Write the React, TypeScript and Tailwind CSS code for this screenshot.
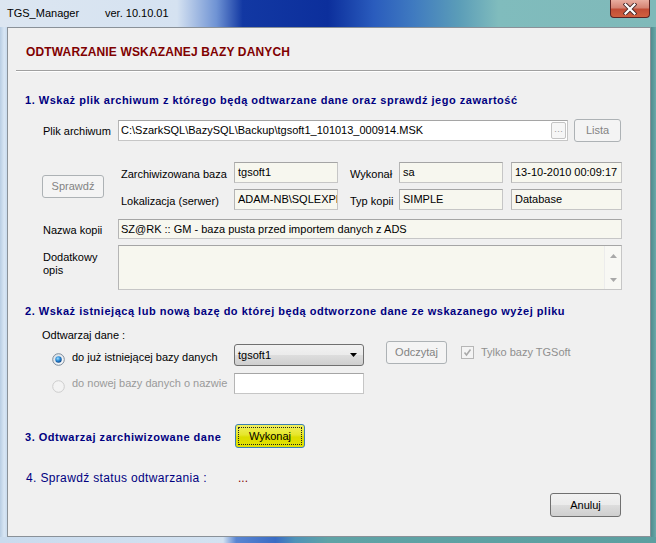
import React from "react";

const roField =
  "h-[21px] bg-[#f7f7ef] border border-[#c6c6c6] border-t-[#a5a5a5] border-l-[#b5b5b5] pl-[3px] flex items-center overflow-hidden whitespace-nowrap";
const disBtn =
  "h-[23px] rounded-[3px] border border-[#adb2b5] bg-[#f4f4f4] text-[#838383] flex items-center justify-center";
const navyHead =
  "font-bold text-[11px] leading-[14px] tracking-[0.52px] text-[#000080] whitespace-nowrap";

function RadioOn() {
  return (
    <svg width="13" height="13" viewBox="0 0 13 13">
      <defs>
        <linearGradient id="rg1" x1="0" y1="0" x2="1" y2="1">
          <stop offset="0" stopColor="#d6dde4" />
          <stop offset="1" stopColor="#ffffff" />
        </linearGradient>
        <radialGradient id="rg2" cx="0.4" cy="0.35" r="0.7">
          <stop offset="0" stopColor="#9fe0ff" />
          <stop offset="0.5" stopColor="#2a8ad6" />
          <stop offset="1" stopColor="#0d3f80" />
        </radialGradient>
      </defs>
      <circle cx="6.5" cy="6.5" r="5.8" fill="url(#rg1)" stroke="#7b8a99" strokeWidth="1" />
      <circle cx="6.5" cy="6.5" r="3.2" fill="url(#rg2)" />
    </svg>
  );
}

function RadioOff() {
  return (
    <svg width="13" height="13" viewBox="0 0 13 13">
      <circle cx="6.5" cy="6.5" r="5.8" fill="#f3f3f3" stroke="#cdcdcd" strokeWidth="1" />
    </svg>
  );
}

export default function App() {
  return (
    <div className="w-[656px] h-[543px] flex flex-col overflow-hidden font-['Liberation_Sans',Arial,sans-serif] text-[11px] text-black">
      {/* title bar */}
      <div className="h-[27px] flex items-start bg-[linear-gradient(90deg,#dce6f1_0%,#d5e2f1_27%,#6f93d4_33%,#1238a3_37%,#0c2f9c_50%,#2a5cbd_57%,#3f7ac0_63%,#5b9db8_70%,#80bcbd_76%,#7fb9b9_100%)]">
        <div className="pl-[7px] pt-[5px] leading-[16px] text-[11px] flex">
          <span className="inline-block w-[98px]">TGS_Manager</span>
          <span>ver. 10.10.01</span>
        </div>
        <div className="ml-auto mr-[6px] w-[40px] h-[18px] rounded-b-[4px] border border-t-0 border-[#5b2323] bg-[linear-gradient(180deg,#e9ada0_0%,#d58474_45%,#c24d36_55%,#d0603f_100%)] flex items-center justify-center">
          <svg width="14" height="12" viewBox="0 0 14 12">
            <path d="M2.5 1.5 L11.5 10.5 M11.5 1.5 L2.5 10.5" stroke="#4a2a2a" strokeWidth="4" strokeLinecap="square" />
            <path d="M2.5 1.5 L11.5 10.5 M11.5 1.5 L2.5 10.5" stroke="#ffffff" strokeWidth="2.2" strokeLinecap="square" />
          </svg>
        </div>
      </div>

      {/* middle */}
      <div className="h-[510px] flex">
        <div className="w-[7px] bg-[linear-gradient(90deg,#b8cde3_0%,#d8e6f4_60%,#c9dbee_100%)]" />
        <div className="w-[644px] border border-[#8a9198] bg-[#f0f0f0] flex flex-col">
          {/* heading */}
          <div className="mt-[17px] ml-[18px] h-[14px] leading-[14px] text-[12px] font-bold tracking-[0.15px] text-[#800000] whitespace-nowrap">
            ODTWARZANIE WSKAZANEJ BAZY DANYCH
          </div>
          <div className="mt-[11px] ml-[8px] w-[624px] h-[2px] border-t border-t-[#a0a0a0] border-b border-b-white" />

          {/* section 1 */}
          <div className={"mt-[21px] ml-[17px] h-[14px] " + navyHead}>
            1. Wskaż plik archiwum z którego będą odtwarzane dane oraz sprawdź jego zawartość
          </div>

          <div className="mt-[12px] h-[23px] flex items-center">
            <div className="ml-[35px] w-[75px] pt-[2px]">Plik archiwum</div>
            <div className="relative w-[450px] h-[21px] bg-white border border-[#c6c6c6] border-t-[#a5a5a5] border-l-[#b5b5b5] pl-[2px] flex items-center whitespace-nowrap">
              {"C:\\SzarkSQL\\BazySQL\\Backup\\tgsoft1_101013_000914.MSK"}
              <div className="absolute right-[1px] top-[1px] w-[15px] h-[17px] rounded-[2px] border border-[#c4c4c4] bg-[#f6f6f6] text-[#9a9a9a] text-[9px] leading-[12px] flex items-center justify-center">
                ···
              </div>
            </div>
            <div className={"ml-[6px] w-[47px] " + disBtn}>Lista</div>
          </div>

          {/* middle block */}
          <div className="mt-[20px] flex items-center">
            <div className={"ml-[34px] w-[62px] " + disBtn}>Sprawdź</div>
            <div className="ml-[17px] flex flex-col gap-[6px]">
              <div className="h-[21px] flex items-center">
                <div className="w-[113px] pt-[4px]">Zarchiwizowana baza</div>
                <div className={"w-[104px] " + roField}>tgsoft1</div>
                <div className="ml-[12px] w-[49px] pt-[4px]">Wykonał</div>
                <div className={"w-[104px] " + roField}>sa</div>
                <div className={"ml-[8px] w-[111px] " + roField}>13-10-2010 00:09:17</div>
              </div>
              <div className="h-[21px] flex items-center">
                <div className="w-[113px] pt-[4px]">Lokalizacja (serwer)</div>
                <div className={"w-[104px] " + roField}>{"ADAM-NB\\SQLEXPR"}</div>
                <div className="ml-[12px] w-[49px] pt-[4px]">Typ kopii</div>
                <div className={"w-[104px] " + roField}>SIMPLE</div>
                <div className={"ml-[8px] w-[111px] " + roField}>Database</div>
              </div>
            </div>
          </div>

          {/* nazwa kopii */}
          <div className="mt-[9px] h-[20px] flex items-center">
            <div className="ml-[35px] w-[75px] pt-[3px]">Nazwa kopii</div>
            <div className="w-[504px] h-[20px] bg-[#f7f7ef] border border-[#c6c6c6] border-t-[#a5a5a5] border-l-[#b5b5b5] pl-[2px] flex items-center whitespace-nowrap">
              SZ@RK :: GM - baza pusta przed importem danych z ADS
            </div>
          </div>

          {/* dodatkowy opis */}
          <div className="mt-[6px] h-[45px] flex items-start">
            <div className="ml-[35px] w-[75px] pt-[6px] leading-[13px]">
              Dodatkowy
              <br />
              opis
            </div>
            <div className="w-[504px] h-[45px] bg-[#f7f7ef] border border-[#c6c6c6] border-t-[#a5a5a5] border-l-[#b5b5b5] flex justify-end">
              <div className="w-[17px] h-full bg-[#f8f8f4] border-l border-l-[#ececec] flex flex-col items-center justify-between pt-[8px] pb-[7px]">
                <svg width="7" height="4" viewBox="0 0 7 4">
                  <path d="M0 4 L3.5 0 L7 4 Z" fill="#a8a8a8" />
                </svg>
                <svg width="7" height="4" viewBox="0 0 7 4">
                  <path d="M0 0 L7 0 L3.5 4 Z" fill="#a8a8a8" />
                </svg>
              </div>
            </div>
          </div>

          {/* section 2 */}
          <div className={"mt-[14px] ml-[17px] h-[14px] " + navyHead}>
            2. Wskaż istniejącą lub nową bazę do której będą odtworzone dane ze wskazanego wyżej pliku
          </div>
          <div className="mt-[11px] ml-[34px] h-[12px] leading-[12px]">Odtwarzaj dane :</div>

          {/* radio row 1 */}
          <div className="h-[25px] flex items-start">
            <div className="ml-[44px] mt-[12px] w-[13px] h-[13px]">
              <RadioOn />
            </div>
            <div className="ml-[7px] mt-[9px] w-[162px] leading-[14px] whitespace-nowrap">
              do już istniejącej bazy danych
            </div>
            <div className="mt-[3px] w-[130px] h-[22px] rounded-[3px] border border-[#707070] bg-[linear-gradient(180deg,#f2f2f2_0%,#ebebeb_50%,#dddddd_51%,#cfcfcf_100%)] flex items-center pl-[3px] pr-[6px]">
              <span className="flex-1">tgsoft1</span>
              <svg width="7" height="4" viewBox="0 0 7 4">
                <path d="M0 0 L7 0 L3.5 4 Z" fill="#000" />
              </svg>
            </div>
            <div className={"ml-[22px] w-[61px] " + disBtn}>Odczytaj</div>
            <div className="ml-[14px] mt-[5px] w-[13px] h-[13px] border border-[#b6b6b6] bg-[#f4f4f4] flex items-center justify-center">
              <svg width="9" height="9" viewBox="0 0 9 9">
                <path d="M1.5 4.5 L3.5 7 L7.5 1.5" stroke="#a9a9a9" strokeWidth="1.6" fill="none" />
              </svg>
            </div>
            <div className="ml-[7px] mt-[4px] leading-[14px] text-[#8f8f8f] whitespace-nowrap">Tylko bazy TGSoft</div>
          </div>

          {/* radio row 2 */}
          <div className="mt-[7px] h-[21px] flex items-start">
            <div className="ml-[44px] mt-[7px] w-[13px] h-[13px]">
              <RadioOff />
            </div>
            <div className="ml-[7px] mt-[3px] w-[162px] leading-[14px] text-[#9a9a9a] whitespace-nowrap">
              do nowej bazy danych o nazwie
            </div>
            <div className="w-[130px] h-[21px] bg-white border border-[#c6c6c6] border-t-[#a5a5a5] border-l-[#b5b5b5]" />
          </div>

          {/* section 3 */}
          <div className="mt-[30px] h-[24px] flex items-start">
            <div className={"ml-[17px] mt-[6px] w-[210px] " + navyHead}>3. Odtwarzaj zarchiwizowane dane</div>
            <div className="w-[70px] h-[24px] rounded-[3px] border border-[#3c7fb1] bg-[linear-gradient(180deg,#f0f060_0%,#e6e62a_45%,#dcdc00_55%,#e2e200_100%)] p-[2px]">
              <div className="h-full border border-dotted border-[#222] flex items-center justify-center">Wykonaj</div>
            </div>
          </div>

          {/* section 4 */}
          <div className="mt-[23px] h-[14px] flex items-start">
            <div className="ml-[18px] w-[212px] text-[12px] leading-[14px] tracking-[0.35px] text-[#000080] whitespace-nowrap">
              4. Sprawdź status odtwarzania :
            </div>
            <div className="text-[12px] leading-[14px] text-[#800000]">...</div>
          </div>

          {/* Anuluj */}
          <div className="mt-[8px] flex">
            <div className="ml-[542px] w-[71px] h-[24px] rounded-[3px] border border-[#707070] bg-[linear-gradient(180deg,#f2f2f2_0%,#ebebeb_50%,#dddddd_51%,#cfcfcf_100%)] flex items-center justify-center">
              Anuluj
            </div>
          </div>
        </div>
        <div className="w-[5px] bg-[linear-gradient(90deg,#4f8c8e_0%,#6aa8a9_100%)]" />
      </div>

      {/* bottom */}
      <div className="h-[6px] bg-[linear-gradient(90deg,#c9dbee_0%,#d3e2f1_34%,#5a86d2_36%,#3a6cc4_42%,#4f93b8_45%,#5fa3a6_50%,#5c9fa0_100%)]" />
    </div>
  );
}
